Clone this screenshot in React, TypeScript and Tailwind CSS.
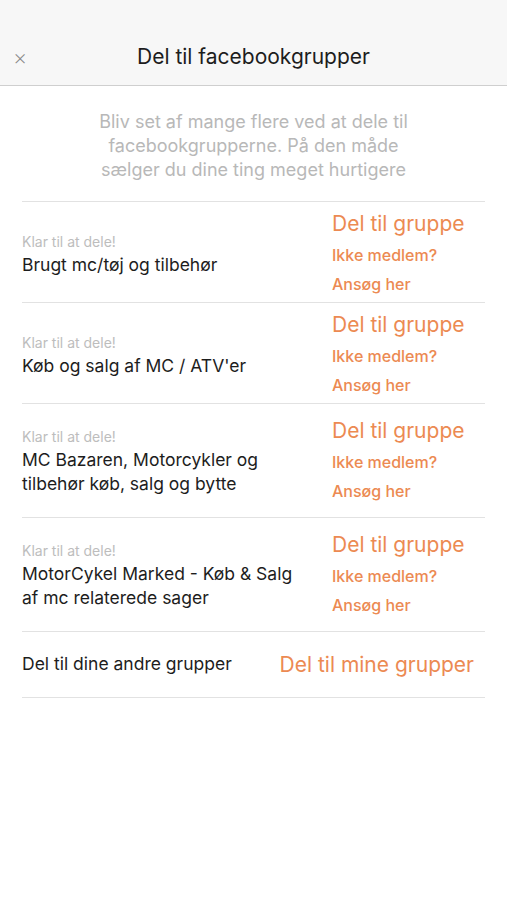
const groups = [
  { id: 1, name: ["Brugt mc/tøj og tilbehør"] },
  { id: 2, name: ["Køb og salg af MC / ATV'er"] },
  { id: 3, name: ["MC Bazaren, Motorcykler og", "tilbehør køb, salg og bytte"] },
  { id: 4, name: ["MotorCykel Marked - Køb & Salg", "af mc relaterede sager"] },
];

function GroupRow({ name }: { name: string[] }) {
  const tall = name.length > 1;
  return (
    <div
      className={`grid grid-cols-[1fr_153px] items-center border-b border-[#e2e2e2] ${
        tall ? "pb-[11px] pt-[12px]" : "pb-[3px] pt-[7px]"
      }`}
    >
      <div>
        <p className="text-[14px] leading-[20px] text-[#bdbdbd]">Klar til at dele!</p>
        {name.map((line) => (
          <p key={line} className="mt-[2px] text-[17.5px] leading-[22px] text-[#1d1d1d]">
            {line}
          </p>
        ))}
      </div>
      <div className="flex flex-col text-[#ec8a52]">
        <span className="text-[21px] leading-[30px]">Del til gruppe</span>
        <span className="mt-[1px] text-[16px] font-medium leading-[30px]">Ikke medlem?</span>
        <span className="text-[16px] font-medium leading-[29px]">Ansøg her</span>
      </div>
    </div>
  );
}

export default function App() {
  return (
    <div className="min-h-[900px] w-full bg-white font-['Inter','Liberation_Sans',sans-serif]">
      <header className="grid h-[86px] grid-cols-[60px_1fr_60px] items-center border-b border-[#cfcfcf] bg-[#f7f7f7] pt-[28px]">
        <span className="pl-[13px] text-[22px] font-extralight leading-none text-[#888]">×</span>
        <h1 className="text-center text-[21px] text-[#1d1d1d]">Del til facebookgrupper</h1>
        <span />
      </header>

      <p className="mx-auto mt-[24px] max-w-[340px] text-center text-[18px] leading-[24px] text-[#b8b8b8]">
        Bliv set af mange flere ved at dele til facebookgrupperne. På den måde sælger du dine ting
        meget hurtigere
      </p>

      <div className="mx-[22px] mt-[19px] border-t border-[#e2e2e2]">
        {groups.map((g) => (
          <GroupRow key={g.id} name={g.name} />
        ))}
        <div className="flex h-[66px] items-center justify-between border-b border-[#e2e2e2] pr-[11px]">
          <span className="text-[17.5px] text-[#1d1d1d]">Del til dine andre grupper</span>
          <span className="text-[21px] text-[#ec8a52]">Del til mine grupper</span>
        </div>
      </div>
    </div>
  );
}
